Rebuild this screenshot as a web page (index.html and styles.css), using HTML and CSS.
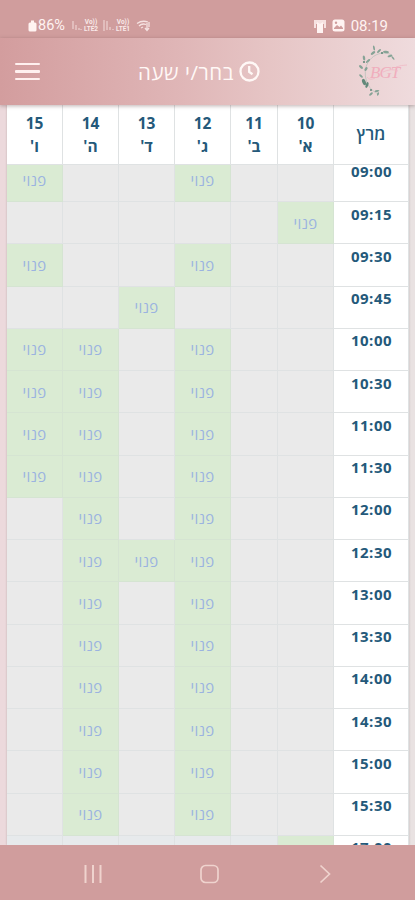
FILE: index.html
```
<!DOCTYPE html>
<html lang="he" dir="rtl">
  <head>
    <meta charset="UTF-8" />
    <meta name="viewport" content="width=device-width, initial-scale=1.0" />
    <title>בחר/י שעה</title>
    <link rel="stylesheet" href="styles.css">
  </head>
  <body>
    <div class="status-bar">
      <div class="status-group">
        <svg width="9" height="12" viewBox="0 0 9 12" fill="currentColor">
          <rect x="0.5" y="2.5" width="8" height="9" rx="1.5" />
          <rect x="3" y="0.5" width="3" height="3" />
        </svg>
        <span class="battery">86%</span>
        <svg class="signal" width="10" height="11" viewBox="0 0 10 11" stroke="currentColor">
          <path d="M1 1v8M4 5v5M7 8v2M9 9v1" fill="none" />
        </svg>
        <span class="lte"><span>Vo))</span><span>LTE2</span></span>
        <svg class="signal" width="11" height="11" viewBox="0 0 11 11" stroke="currentColor">
          <path d="M1 0v11M4 1v9M7 7v3M10 9v1" fill="none" />
        </svg>
        <span class="lte"><span>Vo))</span><span>LTE1</span></span>
        <svg class="wifi" width="15" height="12" viewBox="0 0 15 12" fill="none" stroke="currentColor" stroke-width="1.3">
          <path d="M1 3.5Q6 0 12 2M3 6q3-3 7-1.5M5 8l2-1M11 3v7M9 8l2 2.5 2-2.5M13 2v5" />
        </svg>
      </div>
      <div class="status-group">
        <svg width="14" height="14" viewBox="0 0 14 14" fill="currentColor">
          <path d="M1 1h12v8h-2V5H3v4H1z" opacity="0.8" />
          <path d="M4 3l3 2 3-2v11H4z" />
        </svg>
        <svg class="photo" width="13" height="13" viewBox="0 0 13 13">
          <rect x="0.5" y="0.5" width="12" height="12" rx="2.5" fill="currentColor" />
          <path d="M2 9l3-3 2.5 2L9 6.5 11 9v1H2z" fill="#d09d9d" />
          <circle cx="4" cy="3.8" r="1.2" fill="#d09d9d" />
        </svg>
        <span class="clock">08:19</span>
      </div>
    </div>

    <nav class="navbar">
      <div class="hamburger">
        <span></span>
        <span></span>
        <span></span>
      </div>
      <h1 class="title">
        <svg width="21" height="21" viewBox="0 0 21 21" fill="none" stroke="currentColor">
          <circle cx="10.5" cy="10.5" r="9" stroke-width="2.3" />
          <path d="M10.2 5v6l3.3 2.3" stroke-width="2.3" />
        </svg>
        <span>בחר/י שעה</span>
      </h1>
      <svg class="logo" width="54" height="56" viewBox="0 0 54 56">
        <path d="M34 11C24 6 12 11 8 23c-3 12 3 24 13 27" fill="none" stroke="#a9bbb2" stroke-width="0.6" />
        <g fill="#86a396">
          <ellipse cx="16" cy="4" rx="0.9" ry="2.6" transform="rotate(-12 16 4)" />
          <ellipse cx="15" cy="9" rx="1.3" ry="2.6" transform="rotate(55 15 9)" />
          <ellipse cx="21" cy="7" rx="1" ry="2.6" transform="rotate(45 21 7)" />
          <ellipse cx="28" cy="8" rx="1.3" ry="3" transform="rotate(95 28 8)" />
          <ellipse cx="32" cy="12" rx="1.1" ry="2.5" transform="rotate(75 32 12)" />
          <ellipse cx="35" cy="14" rx="0.8" ry="2.2" transform="rotate(-40 35 14)" />
          <ellipse cx="6" cy="14" rx="1.2" ry="2.6" transform="rotate(-10 6 14)" />
          <ellipse cx="10" cy="17" rx="1.1" ry="2.6" transform="rotate(50 10 17)" />
          <ellipse cx="3" cy="23" rx="1.2" ry="2.4" transform="rotate(-50 3 23)" />
          <ellipse cx="8" cy="25" rx="1.2" ry="2.2" transform="rotate(35 8 25)" />
          <ellipse cx="3" cy="32" rx="1" ry="2.2" transform="rotate(-50 3 32)" />
          <ellipse cx="19" cy="47" rx="1" ry="2.4" transform="rotate(80 19 47)" />
          <ellipse cx="13" cy="50" rx="1.1" ry="2.2" transform="rotate(50 13 50)" />
          <ellipse cx="20" cy="50" rx="0.9" ry="1.8" transform="rotate(20 20 50)" />
        </g>
        <g fill="#62897a">
          <ellipse cx="6" cy="38" rx="1.8" ry="3.3" transform="rotate(-20 6 38)" />
          <ellipse cx="9" cy="41" rx="1.3" ry="3" transform="rotate(20 9 41)" />
          <circle cx="24" cy="9" r="1.1" />
          <circle cx="6" cy="18" r="1.1" />
          <circle cx="13" cy="46" r="1" />
        </g>
        <text class="monogram" x="12" y="34" direction="ltr">BGT</text>
        <path d="M9 33q3 4 8 1M38 23q5-2 11-2M25 28q8-4 15-1" fill="none" stroke="#f0b9c5" stroke-width="0.8" />
      </svg>
    </nav>

    <main class="schedule">
      <div class="row head">
        <div class="cell month">מרץ</div>
        <div class="cell"><span>10</span><span>א'</span></div>
        <div class="cell"><span>11</span><span>ב'</span></div>
        <div class="cell"><span>12</span><span>ג'</span></div>
        <div class="cell"><span>13</span><span>ד'</span></div>
        <div class="cell"><span>14</span><span>ה'</span></div>
        <div class="cell"><span>15</span><span>ו'</span></div>
      </div>
      <div class="slots"></div>
    </main>

    <div class="system-nav">
      <svg width="22" height="22" viewBox="0 0 22 22" fill="none" stroke="currentColor" stroke-width="2">
        <path d="M3.5 2v18M11 2v18M18.5 2v18" />
      </svg>
      <svg width="22" height="22" viewBox="0 0 22 22" fill="none" stroke="currentColor" stroke-width="1.7">
        <rect x="3" y="2.5" width="17" height="17" rx="4.5" />
      </svg>
      <svg width="22" height="22" viewBox="0 0 22 22" fill="none" stroke="currentColor" stroke-width="1.7">
        <path d="M6.5 2.5l9 8.5-9 8.5" />
      </svg>
    </div>

    <script src="script.js"></script>
  </body>
</html>
```

FILE: styles.css
```
* {
  margin: 0;
  padding: 0;
  box-sizing: border-box;
  font-family: "Open Sans", "Noto Sans", "DejaVu Sans", sans-serif;
}

:root {
  --bar-color: #d09d9d;
  --text-color: #24597a;
  --free-color: #daebd3;
  --busy-color: #eaeaea;
  --line-color: #dfe2e3;
}

body {
  display: flex;
  flex-direction: column;
  height: 900px;
  overflow: hidden;
  background: linear-gradient(to right, #ecd9dc, #e9e2e2);
}

.status-bar {
  display: flex;
  direction: ltr;
  justify-content: space-between;
  align-items: center;
  flex: none;
  height: 38px;
  padding: 13px 27px 0 28px;
  background: var(--bar-color);
  color: #fff3f2;
}

.status-group {
  display: flex;
  align-items: center;
}

.battery {
  width: 28px;
  margin-left: 1px;
  font-size: 14.5px;
  line-height: 16px;
  font-family: Roboto, sans-serif;
}

.signal {
  margin-left: 6px;
  opacity: 0.75;
}

.signal ~ .signal {
  margin-left: 4px;
}

.lte {
  display: flex;
  flex-direction: column;
  align-items: center;
  width: 16px;
  margin-left: 1px;
  opacity: 0.9;
}

.lte span {
  font-family: Roboto, sans-serif;
  font-size: 6.5px;
  font-weight: 700;
  line-height: 7px;
}

.wifi {
  margin-left: 5px;
  opacity: 0.8;
}

.photo {
  margin-left: 5px;
}

.clock {
  margin-left: 6px;
  font-family: Roboto, sans-serif;
  font-size: 15px;
  line-height: 16px;
}

.navbar {
  display: flex;
  direction: ltr;
  align-items: center;
  flex: none;
  position: relative;
  z-index: 3;
  height: 67px;
  padding: 0 3px 0 15px;
  background: linear-gradient(to right, #d39d9e 0%, #dfb5b6 42%, #e6c5c5 65%, #efdbdd 100%);
  box-shadow: 0 1px 4px rgba(90, 60, 60, 0.4);
  color: #fff8f6;
}

.hamburger {
  display: flex;
  flex-direction: column;
  gap: 5.5px;
  width: 25px;
}

.hamburger span {
  height: 2.2px;
  border-radius: 1px;
  background: #fff0ef;
}

.title {
  display: flex;
  direction: rtl;
  align-items: center;
  gap: 5px;
  margin-left: 98px;
  font-size: 20.5px;
  font-weight: 400;
  line-height: 26px;
  letter-spacing: 0.55px;
  white-space: nowrap;
}

.logo {
  margin-left: auto;
}

.monogram {
  fill: #f0aebd;
  font-family: "Liberation Serif", serif;
  font-size: 17px;
  font-style: italic;
  letter-spacing: -1px;
}

.schedule {
  flex: 1;
  min-height: 0;
  margin: 0 6px 0 7px;
  overflow: hidden;
  background: #e7eaec;
  box-shadow: 0 0 2px rgba(100, 90, 90, 0.35);
}

.row {
  display: grid;
  grid-template-columns: 75px 56px 47px 56px 56px 56px 56px;
  height: 42.25px;
}

.head {
  position: relative;
  z-index: 2;
  height: 60px;
  background: #fff;
}

.cell {
  display: flex;
  justify-content: center;
  align-items: center;
  border-right: 1px solid var(--line-color);
  border-bottom: 1px solid var(--line-color);
}

.head .cell {
  flex-direction: column;
  color: var(--text-color);
  font-size: 15.5px;
  font-weight: 700;
  line-height: 22.5px;
}

.head .month {
  font-size: 17px;
  font-weight: 600;
}

/* the list is scrolled a little under the header */
.slots {
  margin-top: -5.2px;
}

.slots .cell {
  background: var(--busy-color);
}

.slots .time {
  align-items: flex-start;
  padding: 2.5px 0 0 1px;
  background: #fff;
  color: var(--text-color);
  font-size: 15px;
  font-weight: 700;
  line-height: 18px;
  letter-spacing: 0.5px;
}

.slots .free {
  background: var(--free-color);
  border-color: #d5e4d2;
  color: #9bb3e0;
  font-size: 15px;
  font-weight: 500;
  letter-spacing: 0.3px;
}

.slots .pending {
  background: #e7eaec;
}

.system-nav {
  display: flex;
  direction: ltr;
  justify-content: space-between;
  align-items: center;
  flex: none;
  height: 55px;
  padding: 2px 79px 0 82px;
  background: var(--bar-color);
  color: #efd3ce;
}
```

FILE: script.js
```
// Free days for each hour
const slots = [
  ["09:00", [12, 15]],
  ["09:15", [10]],
  ["09:30", [12, 15]],
  ["09:45", [13]],
  ["10:00", [12, 14, 15]],
  ["10:30", [12, 14, 15]],
  ["11:00", [12, 14, 15]],
  ["11:30", [12, 14, 15]],
  ["12:00", [12, 14]],
  ["12:30", [12, 13, 14]],
  ["13:00", [12, 14]],
  ["13:30", [12, 14]],
  ["14:00", [12, 14]],
  ["14:30", [12, 14]],
  ["15:00", [12, 14]],
  ["15:30", [12, 14]],
  ["17:00", [10]],
];

const list = document.querySelector(".slots");

slots.forEach(([time, freeDays]) => {
  const row = document.createElement("div");
  row.className = "row";

  const timeCell = document.createElement("div");
  timeCell.className = "cell time";
  timeCell.textContent = time;
  row.appendChild(timeCell);

  for (let day = 10; day <= 15; day++) {
    const cell = document.createElement("div");
    cell.className = "cell";
    if (freeDays.includes(day)) {
      cell.classList.add("free");
      cell.textContent = "פנוי";
    } else if (time === "17:00") {
      cell.classList.add("pending");
    }
    row.appendChild(cell);
  }

  list.appendChild(row);
});
```
